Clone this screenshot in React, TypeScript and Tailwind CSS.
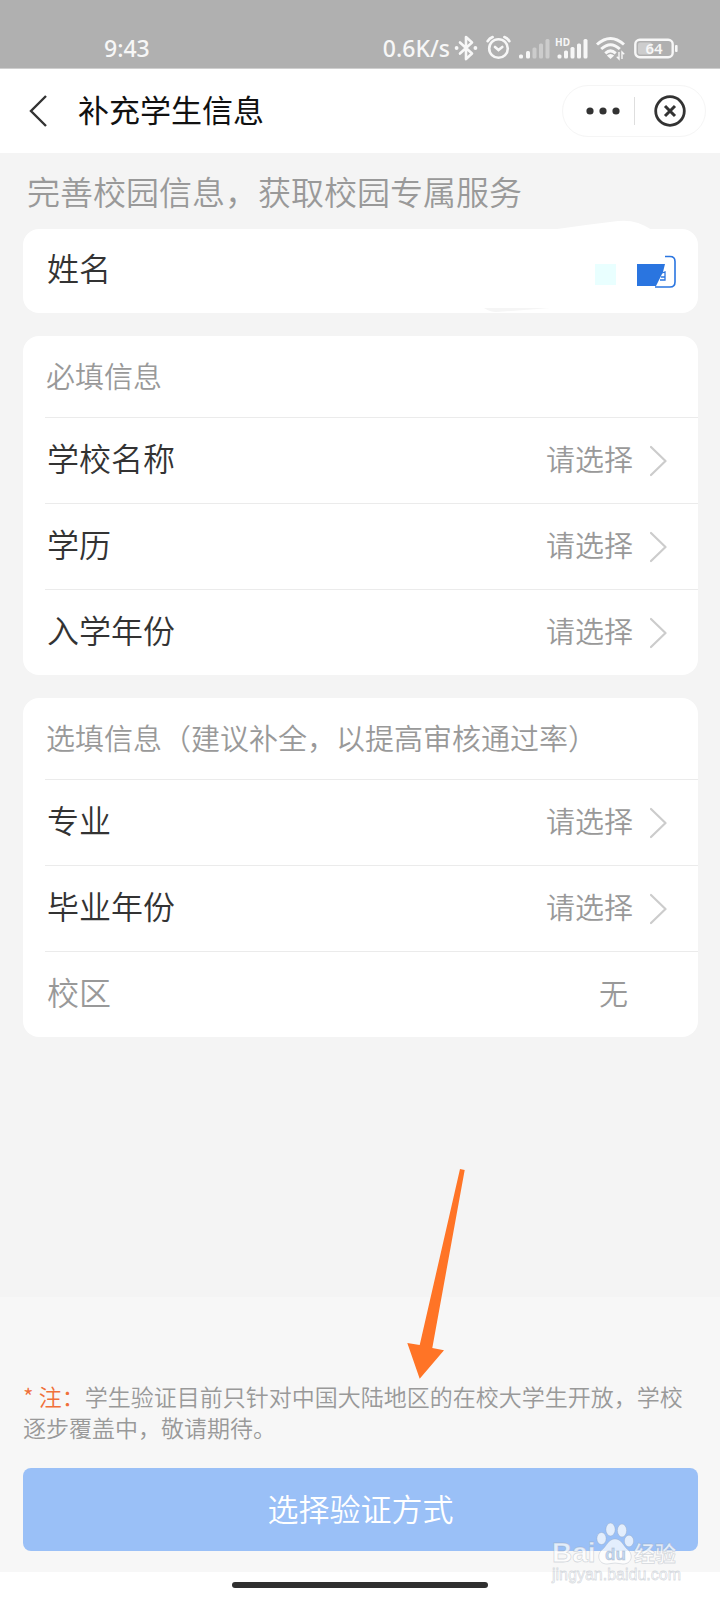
import React from 'react';

interface Field {
    id: string;
    label: string;
    value?: string;
}

interface FieldCardProps {
    title: string;
    fields: Field[];
}

const requiredFields: Field[] = [
    { id: 'school', label: '学校名称' },
    { id: 'degree', label: '学历' },
    { id: 'enroll-year', label: '入学年份' },
];

const optionalFields: Field[] = [
    { id: 'major', label: '专业' },
    { id: 'graduation-year', label: '毕业年份' },
    { id: 'campus', label: '校区', value: '无' },
];

const StatusBar: React.FC = () => (
    <div className="flex h-[69px] items-center justify-between border-b border-[#cfcfcf] bg-[#b0b0b0] pt-7 pr-[42px] pl-[104px] font-['Noto_Sans',sans-serif] text-[23px] font-medium text-[#f7f7f7]">
        <span>9:43</span>
        <div className="flex items-center gap-1">
            <span>0.6K/s</span>
            <div className="flex items-center gap-2">
                {/* Bluetooth */}
                <svg width="24" height="28" viewBox="0 0 24 28" fill="none" stroke="currentColor" strokeWidth="2.6" strokeLinejoin="round" strokeLinecap="round">
                    <path d="M6 8.5 18 19.5 12 25V3l6 5.5L6 19.5" />
                    <circle cx="2.6" cy="14" r="1.9" fill="currentColor" stroke="none" />
                    <circle cx="21.4" cy="14" r="1.9" fill="currentColor" stroke="none" />
                </svg>
                {/* Alarm */}
                <svg width="25" height="28" viewBox="0 0 25 28" fill="none" stroke="currentColor" strokeWidth="2.6" strokeLinecap="round">
                    <circle cx="12.5" cy="14.5" r="9.3" />
                    <path d="M1.6 7.2Q3.5 4.2 6.6 3M23.4 7.2Q21.5 4.2 18.4 3M9 13l3.5 3 3.8-3" />
                </svg>
                {/* Signal strength, both SIM cards */}
                <svg width="69" height="28" viewBox="0 0 69 28" fill="currentColor">
                    <rect x="0" y="20.5" width="4" height="4" rx="1.5" />
                    <rect x="7" y="17" width="4" height="7.5" rx="1.5" />
                    <g opacity="0.4">
                        <rect x="13.5" y="13.5" width="4" height="11" rx="1.5" />
                        <rect x="20" y="9.5" width="4" height="15" rx="1.5" />
                        <rect x="26.5" y="5" width="4" height="19.5" rx="1.5" />
                    </g>
                    <text x="36" y="12" fontSize="10" fontWeight="700">HD</text>
                    <rect x="38.5" y="20.5" width="4" height="4" rx="1.5" />
                    <rect x="45" y="16.5" width="4" height="8" rx="1.5" />
                    <rect x="51.5" y="13" width="4" height="11.5" rx="1.5" />
                    <rect x="58" y="9.5" width="4" height="15" rx="1.5" />
                    <rect x="64.5" y="5" width="4" height="19.5" rx="1.5" />
                </svg>
                {/* Wifi */}
                <svg width="30" height="28" viewBox="0 0 30 28" fill="none" stroke="currentColor" strokeWidth="3">
                    <path d="M1 10.5Q14.5-1.5 28 10.5M5.2 15Q14.5 6.5 23.8 15M9.3 19.3Q14.5 14.5 19.7 19.3" />
                    <path d="M10.8 21.4q3.7-3 7.4 0L14.5 25z" fill="currentColor" stroke="none" />
                    <path d="M23 18v7l-2.2-2.2M26 25v-7l2.2 2.2" strokeWidth="1.4" />
                </svg>
                {/* Battery */}
                <svg width="44" height="28" viewBox="0 0 44 28" fill="none">
                    <rect x="4" y="8.5" width="14" height="12" rx="2" fill="#cdcdcd" />
                    <rect x="1.3" y="5.8" width="37.4" height="17.4" rx="4.5" stroke="currentColor" strokeWidth="2.4" />
                    <rect x="41" y="11" width="2.6" height="7" rx="1" fill="currentColor" />
                    <text x="20" y="19.500" fontSize="15" fontWeight="600" textAnchor="middle" fill="currentColor">64</text>
                </svg>
            </div>
        </div>
    </div>
);

const Header: React.FC = () => (
    <header className="flex h-[84px] items-center bg-white pr-[14px] pl-7">
        <button type="button" aria-label="返回" className="mr-[30px]">
            <svg width="20" height="34" viewBox="0 0 20 34" fill="none" stroke="#333" strokeWidth="2.4">
                <path d="M18 2 3 17l15 15" />
            </svg>
        </button>
        <h1 className="pb-1 text-[31px] leading-10 font-normal text-[#111]">补充学生信息</h1>
        <div className="ml-auto flex h-[52px] w-36 items-center rounded-full border border-[#f5f5f5]">
            <button type="button" aria-label="更多" className="flex w-[71px] justify-center pl-2">
                <svg width="34" height="8" viewBox="0 0 34 8" fill="#333">
                    <circle cx="4" cy="4" r="3.6" />
                    <circle cx="17" cy="4" r="3.6" />
                    <circle cx="30" cy="4" r="3.6" />
                </svg>
            </button>
            <span className="h-7 w-px bg-[#dedede]" />
            <button type="button" aria-label="关闭" className="flex flex-1 justify-center">
                <svg width="32" height="32" viewBox="0 0 32 32" fill="none" stroke="#333" strokeWidth="2.8">
                    <circle cx="16" cy="16" r="14.3" />
                    <path d="m11 11 10 10M21 11 11 21" strokeWidth="3" />
                </svg>
            </button>
        </div>
    </header>
);

const NameCard: React.FC = () => (
    <div className="relative flex h-[84px] items-center rounded-2xl bg-white pl-6">
        <label htmlFor="name" className="pb-2 text-[32px] leading-10 text-[#333]">姓名</label>
        <input id="name" type="text" className="min-w-0 flex-1 bg-transparent pr-28 text-right text-[29px] outline-none" />
        {/* Smudged-out name and scan icon */}
        <svg className="pointer-events-none absolute right-0 bottom-0" width="240" height="96" viewBox="0 0 240 96" fill="none">
            <path d="M92 13 128 8 160 4Q178 2 194 13z" fill="#fff" />
            <path d="M26 91h66l-26 2-28 2q-6 0-12-4z" fill="#f5f5f5" />
            <rect x="137" y="47" width="21" height="21" fill="#e9ffff" />
            <path d="M179 47h28l-2 8-7 14h-19z" fill="#2a75e0" />
            <path d="M207 39.5h5q5 0 5 5V65q0 5-5 5h-15" stroke="#2a75e0" strokeWidth="1.6" />
            <path d="M204 56l3-1v8h-5M203 60h4" stroke="#2a75e0" strokeWidth="1.3" />
        </svg>
    </div>
);

const FieldCard: React.FC<FieldCardProps> = ({ title, fields }) => (
    <section className="rounded-2xl bg-white pl-[22px]">
        <h2 className="flex h-[81px] items-center pb-0.5 pl-px text-[29px] text-[#999]">{title}</h2>
        {fields.map(field => (
            <div key={field.id} className="flex h-[86px] items-center justify-between border-t border-[#ebebeb] pr-[30px] pl-0.5">
                {field.value ? (
                    <>
                        <span className="pb-2 text-[32px] leading-10 text-[#999]">{field.label}</span>
                        <span className="pr-10 pb-1 text-[29px] text-[#999]">{field.value}</span>
                    </>
                ) : (
                    <>
                        <label htmlFor={field.id} className="pb-2 text-[32px] leading-10 text-[#333]">{field.label}</label>
                        <div className="flex items-center gap-4">
                            <select id={field.id} className="appearance-none bg-transparent pb-1 text-[29px] text-[#999] outline-none">
                                <option>请选择</option>
                            </select>
                            <svg width="18" height="32" viewBox="0 0 18 32" fill="none" stroke="#ccc" strokeWidth="2.2" strokeLinecap="round" strokeLinejoin="round">
                                <path d="M1 2 15.5 16 1 30" />
                            </svg>
                        </div>
                    </>
                )}
            </div>
        ))}
    </section>
);

const Watermark: React.FC = () => (
    <svg className="pointer-events-none absolute right-9 bottom-[14px]" width="134" height="68" viewBox="0 0 134 68" fill="#fff" fillOpacity="0.72" stroke="#8f9aa8" strokeOpacity="0.35" strokeWidth="0.8" fontFamily="'Liberation Sans', 'Noto Sans CJK SC', sans-serif">
        <text x="2" y="44" fontSize="28" fontWeight="700">Bai</text>
        <ellipse cx="51.5" cy="20.5" rx="4.6" ry="6" />
        <ellipse cx="60.5" cy="11.5" rx="4.6" ry="6.4" />
        <ellipse cx="72" cy="12.5" rx="4.6" ry="6.4" />
        <ellipse cx="79" cy="23" rx="4.6" ry="5.8" />
        <path d="M65 21c6 0 8 6 12 10 7 5 5 15-4 15-3 0-5-1-8-1s-5 1-8 1c-9 0-11-10-4-15 4-4 6-10 12-10z" />
        <text x="55" y="42" fontSize="17" fontWeight="700" fill="#c3d7f3" fillOpacity="1">du</text>
        <text x="84" y="43" fontSize="21" fontWeight="700">经验</text>
        <text x="2" y="62" fontSize="16">jingyan.baidu.com</text>
    </svg>
);

const Footer: React.FC = () => (
    <footer className="relative">
        <div className="bg-[#f7f7f7] pt-[84px] pr-[22px] pb-[21px] pl-[23px]">
            <p className="text-[23px] leading-[31px] text-[#999]">
                <span className="text-[#f0703a]">* 注：</span>学生验证目前只针对中国大陆地区的在校大学生开放，学校逐步覆盖中，敬请期待。
            </p>
            <button type="button" className="mt-[25px] h-[83px] w-full rounded-lg bg-[#9ac0f7] pb-0.5 text-[31px] text-white">
                选择验证方式
            </button>
        </div>
        <div className="flex h-7 justify-center bg-white pt-[10px]">
            <span className="h-1.5 w-64 rounded-full bg-[#303030]" />
        </div>

        {/* Arrow pointing at the note */}
        <svg className="pointer-events-none absolute -top-32 left-[407px]" width="58" height="210" viewBox="0 0 58 210" fill="#ff7426">
            <path d="M53 0 57.7 1 25.3 179 37 181.3 12.7 209.7.3 174 12.7 176z" />
        </svg>
        <Watermark />
    </footer>
);

export default function App() {
    return (
        <div className="flex min-h-screen flex-col bg-[#f4f4f4] font-['Noto_Sans_CJK_SC',sans-serif] font-[350]">
            <StatusBar />
            <Header />
            <main className="flex-1 pr-[22px] pl-[23px]">
                <p className="flex h-[76px] items-center pl-1 text-[33px] leading-10 text-[#999]">完善校园信息，获取校园专属服务</p>
                <form className="flex flex-col gap-[23px]">
                    <NameCard />
                    <FieldCard title="必填信息" fields={requiredFields} />
                    <FieldCard title="选填信息（建议补全，以提高审核通过率）" fields={optionalFields} />
                </form>
            </main>
            <Footer />
        </div>
    );
}
